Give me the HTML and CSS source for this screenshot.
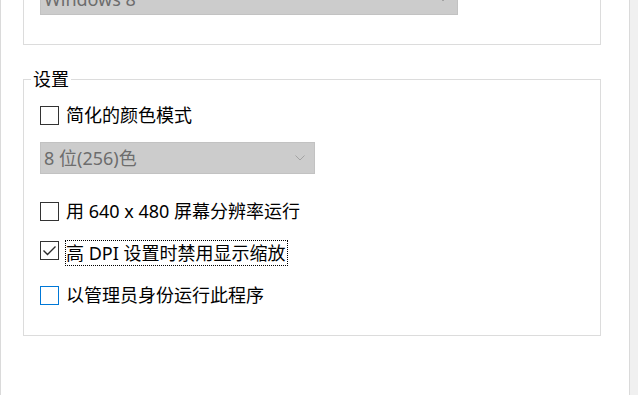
FILE: index.html
```html
<!DOCTYPE html>
<html lang="zh-CN">
<head>
  <meta charset="UTF-8" />
  <meta name="viewport" content="width=device-width, initial-scale=1.0"/>
  <title>兼容性</title>
  <link rel="stylesheet" href="styles.css">
</head>
<body>
  <div class="page">
    <div class="group group-top">
      <div class="combo combo-wide">
        <span class="combo-text">Windows 8</span>
        <svg class="chevron" width="10" height="6" viewBox="0 0 10 6"><path d="M0.5 0.5 L5 5 L9.5 0.5" fill="none" stroke="#a3a3a3" stroke-width="1"/></svg>
      </div>
    </div>

    <fieldset class="group group-settings">
      <legend>设置</legend>
      <div class="group-body">
        <label class="check first">
          <span class="box"></span>
          <span class="text">简化的颜色模式</span>
        </label>

        <div class="combo combo-narrow">
          <span class="combo-text">8 位(256)色</span>
          <svg class="chevron" width="10" height="6" viewBox="0 0 10 6"><path d="M0.5 0.5 L5 5 L9.5 0.5" fill="none" stroke="#a3a3a3" stroke-width="1"/></svg>
        </div>

        <label class="check after-combo">
          <span class="box"></span>
          <span class="text">用 640 x 480 屏幕分辨率运行</span>
        </label>

        <label class="check focus">
          <span class="box">
            <svg width="17" height="17" viewBox="0 0 17 17"><path d="M2.5 8.5 L6.5 12.5 L14.5 4.5" fill="none" stroke="#2b2b2b" stroke-width="1.4"/></svg>
          </span>
          <span class="text">高 DPI 设置时禁用显示缩放</span>
        </label>

        <label class="check hot">
          <span class="box"></span>
          <span class="text">以管理员身份运行此程序</span>
        </label>
      </div>
    </fieldset>
  </div>
</body>
</html>
```

FILE: styles.css
```css
body {
  margin: 0;
  background-color: #f0f0f0;
  font-family: "Noto Sans", "Noto Sans CJK SC", sans-serif;
  font-size: 18px;
  color: #000;
}

.page {
  width: 628px;
  height: 395px;
  background-color: #fff;
  border-left: 1px solid #dadada;
  border-right: 1px solid #dadada;
  overflow: hidden;
}

.group {
  box-sizing: border-box;
  width: 578px;
  margin: 0 0 0 22px;
  border: 1px solid #dcdcdc;
}

.group-top {
  border-top: none;
  padding: 0 16px 29px 16px;
}

/* disabled combo boxes */
.combo {
  box-sizing: border-box;
  height: 32px;
  display: flex;
  align-items: center;
  justify-content: space-between;
  padding: 0 9px 0 3px;
  background-color: #cccccc;
  border: 1px solid #c2c2c2;
  color: #6d6d6d;
  line-height: 24px;
}

.combo-wide {
  width: 418px;
  margin-top: -17px;
}

.combo-narrow {
  width: 275px;
  margin-top: 15px;
}

.chevron {
  flex-shrink: 0;
}

.group-settings {
  margin-top: 22px;
  padding: 0 0 28px 0;
  min-inline-size: 0;
}

.group-settings legend {
  margin-left: 7px;
  padding: 0 2px;
  line-height: 24px;
}

.group-body {
  padding-left: 16px;
}

.check {
  display: flex;
  align-items: center;
  gap: 7px;
  height: 24px;
  line-height: 24px;
  white-space: nowrap;
}

.check.first {
  margin-top: 12px;
}

.check.after-combo {
  margin-top: 25px;
}

.check.focus {
  margin-top: 17px;
  height: 26px;
  align-items: flex-start;
}

.check.hot {
  margin-top: 17px;
}

.box {
  box-sizing: border-box;
  width: 19px;
  height: 19px;
  border: 1px solid #333333;
  background-color: #fff;
  display: flex;
  align-items: center;
  justify-content: center;
  flex-shrink: 0;
}

.focus .box {
  margin-top: 1px;
}

.focus .text {
  margin-left: -1px;
  border: 1px dotted #000;
  padding-right: 1px;
}

.hot .box {
  border-color: #0078d7;
}
```
